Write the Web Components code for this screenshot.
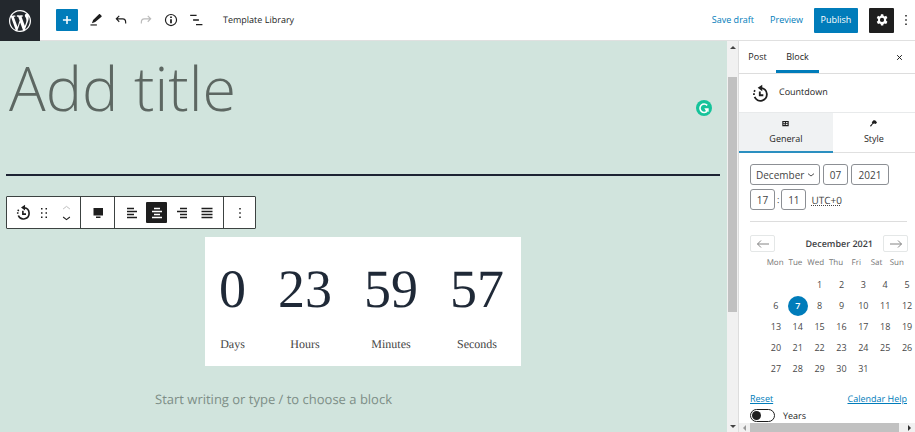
<!DOCTYPE html>
<html lang="en">
<head>
<meta charset="utf-8">
<title>Template Library</title>
<style>
    html, body {
        height: 100%;
    }

    body {
        margin: 0;
        font-family: "Open Sans", "Noto Sans", sans-serif;
        font-size: 9px;
        line-height: 12px;
        color: #1e1e1e;
        text-rendering: geometricPrecision;
        --blue: #007cba;
        --mint: #d1e4dd;
        --ink: #1e1e1e;
    }
</style>
</head>
<body>
<editor-app></editor-app>

<script>
const ICONS = {
    wordpress: '<path transform="scale(1.2)" fill="currentColor" d="M20 10c0-5.510-4.490-10-10-10C4.480 0 0 4.490 0 10c0 5.520 4.480 10 10 10 5.510 0 10-4.480 10-10zM7.780 15.370L4.370 6.220c.55-.02 1.170-.08 1.170-.08.5-.06.44-1.130-.06-1.110 0 0-1.450.11-2.370.11-.18 0-.37 0-.58-.01C4.120 2.690 6.870 1.110 10 1.110c2.330 0 4.450.87 6.050 2.340-.68-.11-1.650.39-1.650 1.580 0 .74.45 1.360.9 2.100.35.61.55 1.360.55 2.460 0 1.490-1.400 5-1.400 5l-3.030-8.370c.54-.02.82-.17.82-.17.5-.05.44-1.250-.06-1.220 0 0-1.440.12-2.380.12-.87 0-2.330-.12-2.330-.12-.5-.03-.56 1.200-.06 1.220l.92.08 1.260 3.410zM17.410 10c.24-.64.74-1.870.43-4.250.7 1.290 1.050 2.710 1.050 4.250 0 3.290-1.730 6.240-4.400 7.780.97-2.590 1.940-5.200 2.920-7.780zM6.100 18.090C3.120 16.650 1.110 13.530 1.110 10c0-1.300.23-2.480.72-3.590C3.250 10.300 4.670 14.200 6.100 18.090zm4.030-6.630l2.580 6.980c-.86.29-1.760.45-2.710.45-.79 0-1.570-.11-2.290-.33.81-2.380 1.620-4.740 2.420-7.100z"/>',
    plus: '<path stroke-width="2.600" d="M12 5v14M5 12h14"/>',
    edit: '<path fill="currentColor" stroke="none" d="m21.500 4.600-2.600-2.600c-.5-.5-1.300-.5-1.800 0L7 11.800 5 17.500l5.600-2L21.500 6.400c.4-.5.4-1.300 0-1.800z"/><path d="M2.500 20.500h11"/>',
    undo: '<path d="M9 5 4 10l5 5M4.500 10H15c3.500 0 5 2.500 5 6v2"/>',
    redo: '<path d="m15 5 5 5-5 5M19.500 10H9c-3.500 0-5 2.500-5 6v2"/>',
    info: '<circle cx="12" cy="12" r="9.500"/><path stroke-width="3" d="M12 10.500v7M12 6v2.600"/>',
    list: '<path stroke-width="2.400" d="M2 4h11M7 12h10M12 20h11"/>',
    cog: '<path fill="currentColor" fill-rule="evenodd" d="m10.200 2-.5 2.700-2 1.100L5.100 4.900 3 8.500l2.200 1.900v2.800L3 15.200l2.100 3.500 2.600-.9 2 1.100.5 2.700h3.900l.5-2.700 2-1.100 2.600.9 2.100-3.500-2.200-2v-2.800L21.300 8.500l-2.100-3.600-2.600.9-2-1.100-.5-2.700zM12 8.200a3.600 3.600 0 1 1 0 7.200 3.600 3.600 0 0 1 0-7.200z"/>',
    dots: '<path fill="currentColor" d="M10.500 2h3v3h-3zm0 8.500h3v3h-3zm0 8.500h3v3h-3z"/>',
    close: '<path stroke-width="3.400" d="m4 4 16 16M20 4 4 20"/>',
    countdown: '<path stroke-width="2.600" d="M13 4.300a9 9 0 1 1-9.300 12.500"/><path fill="currentColor" d="M14.500-.5v9.200L8 4z"/><path stroke-width="2.600" d="M11 9v5.500h5"/><path fill="currentColor" d="M1.500 11.500H4V14H1.500zm1.800-4.700 2 1.400-1.400 2-2-1.400z"/>',
    drag: '<path fill="currentColor" d="M6 2h3v3H6zm0 8.500h3v3H6zM6 19h3v3H6zm9-17h3v3h-3zm0 8.500h3v3h-3zm0 8.500h3v3h-3z"/>',
    up: '<path stroke-width="2.600" d="m3 16 9-7 9 7"/>',
    down: '<path stroke-width="2.800" d="m3 8 9 7 9-7"/>',
    block: '<path fill="currentColor" d="M3 2h19v15H3zm5 17h9v3H8z"/>',
    left: '<path stroke-width="2.800" d="M2 3h14M2 9h20M2 15h14M2 21h20"/>',
    center: '<path stroke-width="2.800" d="M6 3h12M2 9h20M6 15h12M2 21h20"/>',
    right: '<path stroke-width="2.800" d="M8 3h14M2 9h20M8 15h14M8 21h14"/>',
    justify: '<path stroke-width="2.800" d="M1 3h22M1 9h22M1 15h22M1 21h22"/>',
    prev: '<path stroke-width="1.800" d="M24 12H1M8 5l-7 7 7 7"/>',
    next: '<path stroke-width="1.800" d="M0 12h23M16 5l7 7-7 7"/>',
    general: '<path fill="currentColor" fill-rule="evenodd" d="M1 3h22v18H1zm4 4v4h5V7zm9 0v3h5V7zM5 14v3h4v-3zm8-1v4h6v-4z"/>',
    brush: '<path fill="currentColor" d="M12 1c4-1 7 0 9 3l3 5-5 5-4-2-5 2L3 23l-3-3 8-9-2-3z"/>',
    grammarly: '<circle cx="12" cy="12" r="12" fill="#15c39a"/><path stroke="#fff" stroke-width="2.400" d="M16.800 8A6.300 6.300 0 1 0 17 16.500"/><path fill="#fff" d="M12.500 12.300H19V18l-2.200-1.800-1.500 1z"/>',
};

class UiIcon extends HTMLElement {
    constructor() {
        super();
        this.attachShadow({ mode: 'open' });
    }

    connectedCallback() {
        this.shadowRoot.innerHTML = `
            <style>
                :host { display: inline-flex; width: 12px; height: 12px; flex: none; }
                svg { width: 100%; height: 100%; overflow: visible; }
            </style>
            <svg viewBox="0 0 24 24" fill="none" aria-hidden="true">${ICONS[this.getAttribute('name')]}</svg>
        `;
        // line icons carry a stroke, filled shapes don't need one
        this.shadowRoot.querySelectorAll('path, circle').forEach((el) => {
            if (!el.hasAttribute('fill') && !el.hasAttribute('stroke')) {
                el.setAttribute('stroke', 'currentColor');
                if (!el.hasAttribute('stroke-width')) el.setAttribute('stroke-width', '2');
            }
        });
    }
}

class IconButton extends HTMLElement {
    constructor() {
        super();
        this.attachShadow({ mode: 'open' });
    }

    connectedCallback() {
        this.shadowRoot.innerHTML = `
            <style>
                :host { display: inline-flex; --size: 25px; --icon: 14px; }
                button {
                    display: flex;
                    align-items: center;
                    justify-content: center;
                    width: var(--size);
                    height: var(--size);
                    padding: 0;
                    border: 0;
                    border-radius: 1px;
                    background: none;
                    color: inherit;
                }
                ui-icon { width: var(--icon); height: var(--icon); }
                :host([variant=primary]) button { background: var(--blue); color: #fff; }
                :host([variant=dark]) button { background: var(--ink); color: #fff; }
                :host([faded]) { color: #bbb; }
            </style>
            <button type="button" aria-label="${this.getAttribute('label')}">
                <ui-icon name="${this.getAttribute('icon')}"></ui-icon>
            </button>
        `;
    }
}

class ScrollTrack extends HTMLElement {
    constructor() {
        super();
        this.attachShadow({ mode: 'open' }).innerHTML = `
            <style>
                :host { display: flex; flex-direction: column; align-items: center; width: 11px; background: #f1f1f1; }
                :host([horizontal]) { flex-direction: row; width: auto; height: 9px; }
                i { flex: none; width: 11px; height: 12px; display: grid; place-items: center; }
                i::before { content: ""; border: 3px solid transparent; }
                .a::before { border-top: 0; border-bottom: 3px solid #444; }
                .b::before { border-bottom: 0; border-top: 3px solid #444; }
                .track { flex: 1; align-self: stretch; display: flex; flex-direction: column; }
                .before { flex: var(--before, 0); }
                .thumb { flex: var(--thumb, 1); margin: 0 1px; background: #c1c1c1; }
                .after { flex: var(--after, 0); }
                :host([horizontal]) i { height: 9px; }
                :host([horizontal]) .track { flex-direction: row; }
                :host([horizontal]) .thumb { margin: 0; }
                :host([horizontal]) .a::before { border: 3px solid transparent; border-left: 0; border-right: 3px solid #999; }
                :host([horizontal]) .b::before { border: 3px solid transparent; border-right: 0; border-left: 3px solid #333; }
            </style>
            <i class="a"></i>
            <div class="track"><div class="before"></div><div class="thumb"></div><div class="after"></div></div>
            <i class="b"></i>
        `;
    }
}

class EditorHeader extends HTMLElement {
    constructor() {
        super();
        this.attachShadow({ mode: 'open' }).innerHTML = `
            <style>
                :host {
                    display: flex;
                    align-items: center;
                    height: 40px;
                    background: #fff;
                    border-bottom: 1px solid #e0e0e0;
                }
                .logo { display: flex; align-items: center; justify-content: center; width: 40px; height: 41px; margin-bottom: -1px; background: #23282d; color: #fff; }
                .logo ui-icon { width: 22px; height: 22px; }
                .tools { display: flex; align-items: center; margin-left: 16px; }
                .tools > :first-child { --size: 22px; margin-right: 5px; }
                .doc { margin-left: 15px; font-size: 9px; }
                .actions { display: flex; align-items: center; margin-left: auto; gap: 11px; }
                .link, .publish { font: inherit; font-size: 9px; border: 0; background: none; padding: 0; color: var(--blue); }
                .link + .link { margin-left: 5px; }
                .publish { width: 44px; height: 25px; border-radius: 1px; background: var(--blue); color: #fff; font-weight: 500; }
                .more { --size: 12px; --icon: 12px; margin-left: -5px; margin-right: 3px; }
            </style>
            <a class="logo" href="#" aria-label="View posts"><ui-icon name="wordpress"></ui-icon></a>
            <div class="tools">
                <icon-button icon="plus" label="Add block" variant="primary"></icon-button>
                <icon-button icon="edit" label="Tools"></icon-button>
                <icon-button icon="undo" label="Undo"></icon-button>
                <icon-button icon="redo" label="Redo" faded></icon-button>
                <icon-button icon="info" label="Details"></icon-button>
                <icon-button icon="list" label="List view"></icon-button>
            </div>
            <span class="doc">Template Library</span>
            <div class="actions">
                <button class="link" type="button">Save draft</button>
                <button class="link" type="button">Preview</button>
                <button class="publish" type="button">Publish</button>
                <icon-button icon="cog" label="Settings" variant="dark"></icon-button>
                <icon-button class="more" icon="dots" label="Options"></icon-button>
            </div>
        `;
    }
}

class BlockToolbar extends HTMLElement {
    constructor() {
        super();
        this.attachShadow({ mode: 'open' }).innerHTML = `
            <style>
                :host { display: inline-flex; height: 31px; background: #fff; border: 1px solid #3c4241; border-radius: 1px; }
                .group { display: flex; align-items: center; padding: 0 4px; }
                .group + .group { border-left: 1px solid #3c4241; }
                .group:last-child { padding: 0 3px; }
                icon-button { --icon: 12px; }
                icon-button[variant=dark] { --size: 21px; margin: 0 2px; }
                .first { --icon: 15px; }
                .drag { --size: 16px; --icon: 12px; }
                .movers { display: flex; flex-direction: column; margin-left: 4px; }
                .movers icon-button { --size: 11px; --icon: 9px; width: 20px; justify-content: center; }
            </style>
            <div class="group">
                <icon-button class="first" icon="countdown" label="Countdown"></icon-button>
                <icon-button class="drag" icon="drag" label="Drag"></icon-button>
                <div class="movers">
                    <icon-button icon="up" label="Move up" faded></icon-button>
                    <icon-button icon="down" label="Move down"></icon-button>
                </div>
            </div>
            <div class="group"><icon-button icon="block" label="Change alignment"></icon-button></div>
            <div class="group">
                <icon-button icon="left" label="Align left"></icon-button>
                <icon-button icon="center" label="Align center" variant="dark"></icon-button>
                <icon-button icon="right" label="Align right"></icon-button>
                <icon-button icon="justify" label="Justify"></icon-button>
            </div>
            <div class="group"><icon-button icon="dots" label="More options"></icon-button></div>
        `;
    }
}

class CountdownUnit extends HTMLElement {
    constructor() {
        super();
        this.attachShadow({ mode: 'open' }).innerHTML = `
            <style>
                :host { display: flex; flex-direction: column; align-items: center; gap: 18px; font-family: "Liberation Serif", serif; }
                .value { font-size: 54px; line-height: 60px; color: #1f2937; }
                .label { font-size: 12px; line-height: 14px; color: #444; }
            </style>
            <div class="value"><slot></slot></div>
            <div class="label"><slot name="label"></slot></div>
        `;
    }
}

class EditorCanvas extends HTMLElement {
    constructor() {
        super();
        this.attachShadow({ mode: 'open' }).innerHTML = `
            <style>
                :host { display: block; position: relative; overflow: hidden; background: var(--mint); padding: 0 7px 0 6px; }
                .title {
                    display: block;
                    box-sizing: border-box;
                    width: 100%;
                    height: 92px;
                    padding: 0 3px;
                    border: 0;
                    outline: 0;
                    background: none;
                    font-family: "Open Sans", sans-serif;
                    font-size: 61px;
                    font-weight: 300;
                }
                .title::placeholder { color: #5d6762; opacity: 1; }
                hr { margin: 41px 0 20px; border: 0; height: 2px; background: #1c2333; }
                block-toolbar { vertical-align: top; }
                .countdown { display: flex; justify-content: center; gap: 32px; width: fit-content; margin: 8px auto 0; padding: 22px 17px 15px 14px; background: #fff; }
                .prompt { max-width: 416px; margin: 24px auto 0; font-size: 13px; line-height: 18px; color: #7d8e87; }
                .grammarly { position: absolute; right: 15px; top: 59px; width: 16px; height: 16px; }
            </style>
            <input class="title" aria-label="Add title" placeholder="Add title">
            <hr>
            <block-toolbar></block-toolbar>
            <div class="countdown">
                <countdown-unit>0<span slot="label">Days</span></countdown-unit>
                <countdown-unit>23<span slot="label">Hours</span></countdown-unit>
                <countdown-unit>59<span slot="label">Minutes</span></countdown-unit>
                <countdown-unit>57<span slot="label">Seconds</span></countdown-unit>
            </div>
            <p class="prompt">Start writing or type / to choose a block</p>
            <ui-icon class="grammarly" name="grammarly"></ui-icon>
        `;
    }
}

class DateTimePicker extends HTMLElement {
    constructor() {
        super();
        this.attachShadow({ mode: 'open' }).innerHTML = `
            <style>
                :host { display: block; padding: 11px 8px 13px 11px; color: #444; }
                .row { display: flex; align-items: center; gap: 3px; margin-bottom: 4px; }
                .time { gap: 2px; }
                .month { display: flex; align-items: center; position: relative; }
                .month ui-icon { position: absolute; right: 5px; width: 8px; height: 8px; pointer-events: none; }
                input, select {
                    box-sizing: border-box;
                    height: 21px;
                    margin: 0;
                    padding: 0;
                    border: 1px solid #8c8f94;
                    border-radius: 3px;
                    background: #fff;
                    color: #444;
                    font: inherit;
                    font-size: 10px;
                    text-align: center;
                }
                select { width: 70px; padding-left: 5px; text-align: left; appearance: none; }
                input { width: 25px; }
                .year { width: 38px; }
                .zone { margin-left: 3px; font-size: 10px; text-decoration: underline dotted; }
                hr { margin: 11px 0 0; border: 0; border-top: 1px solid #ddd; }
            </style>
            <div class="row">
                <div class="month">
                    <select aria-label="Month"><option>December</option></select>
                    <ui-icon name="down"></ui-icon>
                </div>
                <input aria-label="Day" value="07">
                <input class="year" aria-label="Year" value="2021">
            </div>
            <div class="row time">
                <input aria-label="Hours" value="17">
                <span>:</span>
                <input aria-label="Minutes" value="11">
                <span class="zone">UTC+0</span>
            </div>
            <hr>
        `;
    }
}

class MonthCalendar extends HTMLElement {
    constructor() {
        super();
        this.attachShadow({ mode: 'open' });
    }

    connectedCallback() {
        const offset = parseInt(this.getAttribute('offset'));
        const days = parseInt(this.getAttribute('days'));
        const selected = parseInt(this.getAttribute('selected'));
        let rows = '';
        for (let start = 1 - offset; start <= days; start += 7) {
            rows += '<tr>';
            for (let day = start; day < start + 7; day++) {
                const text = day > 0 && day <= days ? day : '';
                rows += day === selected
                    ? `<td><button type="button" class="selected">${text}</button></td>`
                    : `<td>${text ? `<button type="button">${text}</button>` : ''}</td>`;
            }
            rows += '</tr>';
        }
        const names = ['Mon', 'Tue', 'Wed', 'Thu', 'Fri', 'Sat', 'Sun'];

        this.shadowRoot.innerHTML = `
            <style>
                :host { display: block; padding-left: 11px; color: #484848; }
                .nav { display: flex; align-items: center; justify-content: space-between; padding-right: 7px; }
                .nav button { display: flex; align-items: center; justify-content: center; box-sizing: border-box; width: 25px; height: 17px; padding: 0; border: 1px solid #e4e7e7; border-radius: 2px; background: #fff; color: #777; }
                .nav strong { margin-left: auto; margin-right: 10px; font-size: 9px; font-weight: 600; color: #3c4043; }
                .names { display: flex; margin: 5px 0 5px 15px; padding: 0; list-style: none; width: 142px; font-size: 8px; color: #757575; }
                .names li { flex: 1; text-align: center; }
                table { border-collapse: collapse; table-layout: fixed; width: 153px; margin-left: 15px; }
                td { height: 21px; padding: 0; }
                td button { display: block; box-sizing: border-box; width: 20px; height: 20px; margin: 0 auto; padding: 0; border: 0; border-radius: 50%; background: none; color: inherit; font: inherit; font-size: 9px; }
                td .selected { background: var(--blue); color: #fff; font-weight: 600; }
            </style>
            <div class="nav">
                <button type="button" aria-label="Previous month"><ui-icon name="prev"></ui-icon></button>
                <strong>${this.getAttribute('month')}</strong>
                <button type="button" aria-label="Next month"><ui-icon name="next"></ui-icon></button>
            </div>
            <ul class="names">${names.map((n) => `<li>${n}</li>`).join('')}</ul>
            <table><tbody>${rows}</tbody></table>
        `;
    }
}

class ToggleControl extends HTMLElement {
    constructor() {
        super();
        this.attachShadow({ mode: 'open' }).innerHTML = `
            <style>
                :host { display: block; }
                label { display: flex; align-items: center; gap: 8px; font-size: 9px; }
                input { appearance: none; display: flex; align-items: center; box-sizing: border-box; width: 25px; height: 13px; margin: 0; padding: 0 1px; border: 1px solid #1e1e1e; border-radius: 7px; background: #fff; }
                input::before { content: ""; width: 9px; height: 9px; border-radius: 50%; background: #1e1e1e; }
                input:checked { justify-content: flex-end; }
            </style>
            <label><input type="checkbox"><span><slot></slot></span></label>
        `;
    }
}

class SettingsSidebar extends HTMLElement {
    constructor() {
        super();
        this.attachShadow({ mode: 'open' }).innerHTML = `
            <style>
                :host { display: flex; flex-direction: column; overflow: hidden; background: #fff; border-left: 1px solid #ddd; }
                button { font: inherit; font-size: 9px; color: inherit; border: 0; background: none; padding: 0; }
                .tabs { flex: none; display: flex; height: 32px; padding-right: 8px; border-bottom: 1px solid #ddd; font-weight: 500; }
                .tabs button { width: 37px; }
                .tabs .active { width: 43px; border-bottom: 3px solid var(--blue); padding-top: 3px; }
                .tabs icon-button { margin-left: auto; align-self: center; --size: 16px; --icon: 7px; }
                .card { flex: none; display: flex; gap: 10px; box-sizing: border-box; height: 38px; padding: 0 0 3px 13px; align-items: center; font-weight: 500; }
                .card ui-icon { width: 17px; height: 17px; margin-top: 4px; }
                .modes { flex: none; display: grid; grid-template-columns: 8fr 7fr; height: 41px; border-top: 1px solid #e8eaeb; border-bottom: 1px solid #e0e0e0; box-sizing: border-box; }
                .modes button { display: flex; flex-direction: column; align-items: center; justify-content: center; gap: 6px; border-bottom: 2px solid transparent; margin-bottom: -1px; }
                .modes .active { background: #f0f2f3; border-color: #2b8fc0; }
                .modes ui-icon { width: 7px; height: 7px; }
                .body { flex: 1; min-height: 0; overflow: hidden; }
                .links { display: flex; justify-content: space-between; margin: 14px 8px 4px 11px; }
                .links button, .links a { color: var(--blue); text-decoration: underline; }
                toggle-control { padding-left: 11px; }
                scroll-track { --thumb: 151; --after: 5; flex: none; }
            </style>
            <div class="tabs">
                <button type="button">Post</button>
                <button type="button" class="active">Block</button>
                <icon-button icon="close" label="Close settings"></icon-button>
            </div>
            <div class="card"><ui-icon name="countdown"></ui-icon><span>Countdown</span></div>
            <div class="modes">
                <button type="button" class="active"><ui-icon name="general"></ui-icon>General</button>
                <button type="button"><ui-icon name="brush"></ui-icon>Style</button>
            </div>
            <div class="body">
                <date-time-picker></date-time-picker>
                <month-calendar month="December 2021" offset="2" days="31" selected="7"></month-calendar>
                <div class="links"><button type="button">Reset</button><a href="#">Calendar Help</a></div>
                <toggle-control>Years</toggle-control>
            </div>
            <scroll-track horizontal></scroll-track>
        `;
    }
}

class EditorApp extends HTMLElement {
    constructor() {
        super();
        this.attachShadow({ mode: 'open' }).innerHTML = `
            <style>
                :host { display: grid; grid-template-rows: auto minmax(0, 1fr); height: 100%; overflow: hidden; }
                main { display: grid; grid-template-columns: minmax(0, 1fr) auto 177px; min-height: 0; }
                .page { --before: 24; --thumb: 235; --after: 108; }
            </style>
            <editor-header></editor-header>
            <main>
                <editor-canvas></editor-canvas>
                <scroll-track class="page"></scroll-track>
                <settings-sidebar></settings-sidebar>
            </main>
        `;
    }
}

customElements.define('ui-icon', UiIcon);
customElements.define('icon-button', IconButton);
customElements.define('scroll-track', ScrollTrack);
customElements.define('editor-header', EditorHeader);
customElements.define('block-toolbar', BlockToolbar);
customElements.define('countdown-unit', CountdownUnit);
customElements.define('editor-canvas', EditorCanvas);
customElements.define('date-time-picker', DateTimePicker);
customElements.define('month-calendar', MonthCalendar);
customElements.define('toggle-control', ToggleControl);
customElements.define('settings-sidebar', SettingsSidebar);
customElements.define('editor-app', EditorApp);
</script>
</body>
</html>
